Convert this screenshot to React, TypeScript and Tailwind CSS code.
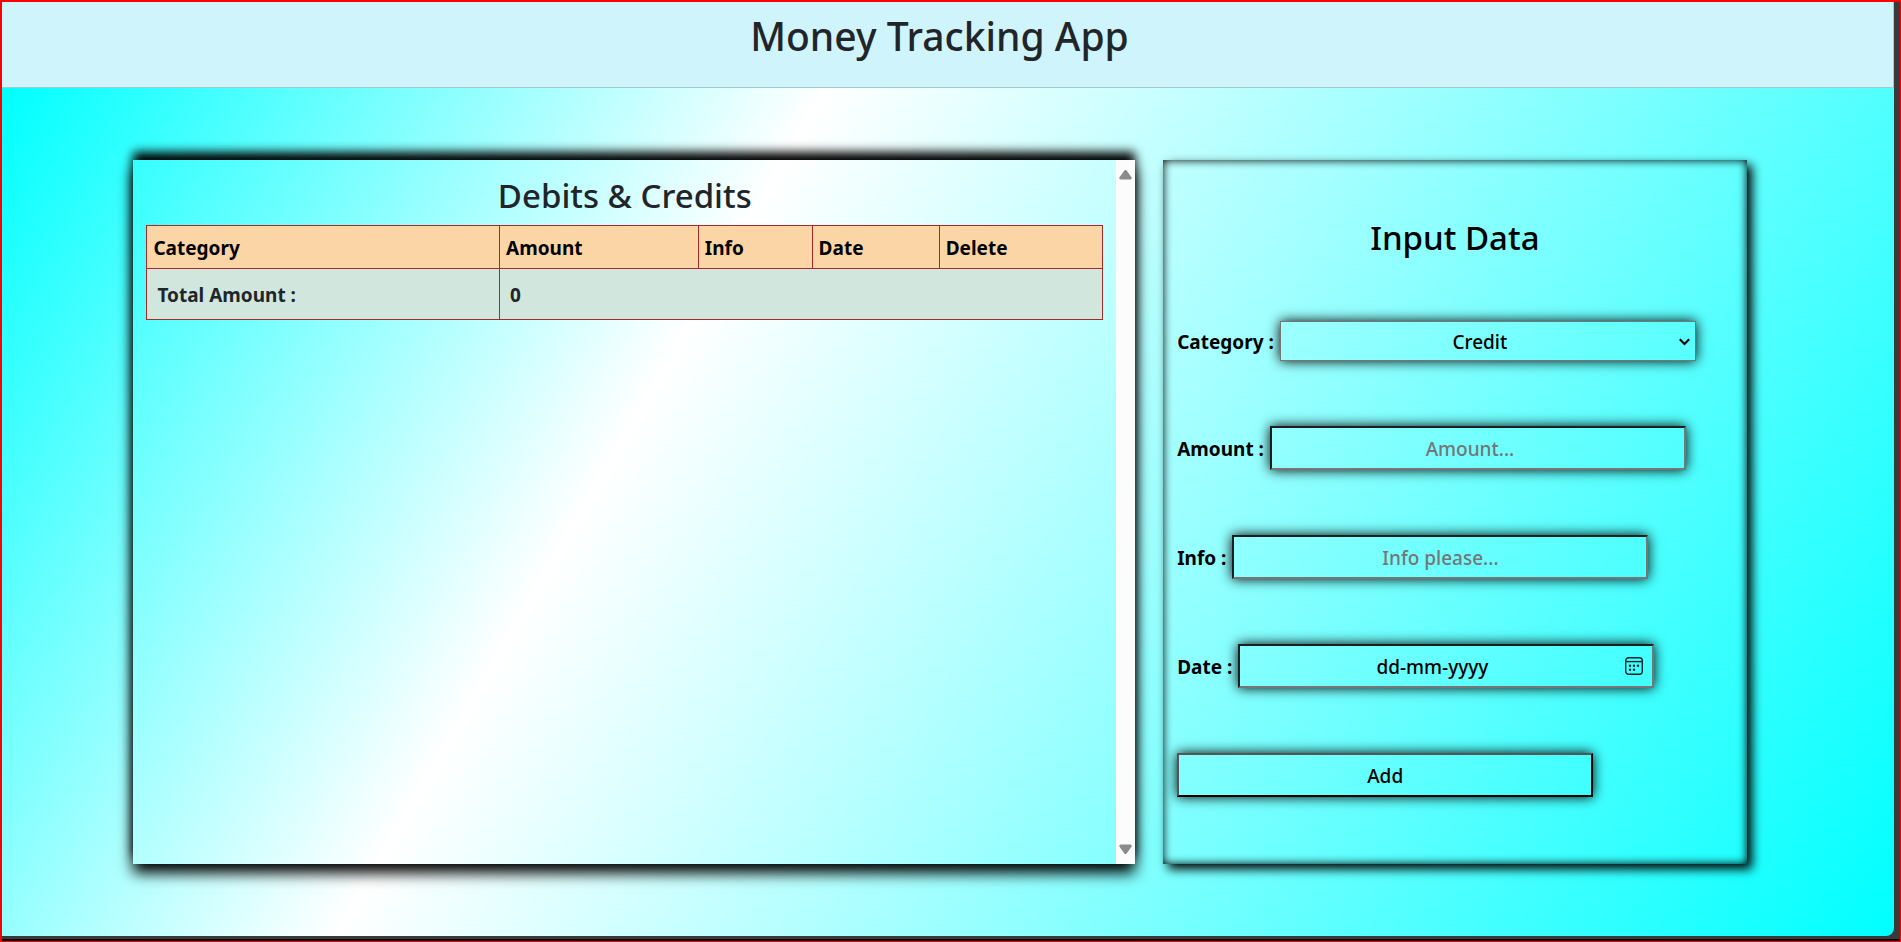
import React from "react";

const glow = "shadow-[0_0_12px_#000]";
const field = `h-11 w-full max-w-[416px] border-2 bg-transparent pt-0.5 text-center text-[19px] leading-7 font-medium text-black ${glow}`;
const inset = "border-t-[#1e1e1e] border-l-[#1e1e1e] border-r-[#767676] border-b-[#767676]";
const label = "shrink-0 pt-0.5 text-[19px] font-bold text-black";
const row = "flex items-center gap-1.5";

function ScrollTrack() {
  return (
    <div aria-hidden="true" className="flex w-[19px] shrink-0 flex-col items-center justify-between bg-[#fcfcfc] py-[9px]">
      <svg width="13" height="11" viewBox="0 0 13 11" fill="#8b8b8b">
        <path d="M5.3 1.6 Q6.5 .4 7.7 1.6 L12.6 8.6 Q13 10.6 11.5 10.6 H1.5 Q0 10.6 .4 8.6 Z" />
      </svg>
      <svg width="13" height="11" viewBox="0 0 13 11" fill="#8b8b8b">
        <path d="M5.3 9.4 Q6.5 10.6 7.7 9.4 L12.6 2.4 Q13 .4 11.5 .4 H1.5 Q0 .4 .4 2.4 Z" />
      </svg>
    </div>
  );
}

function CalendarIcon() {
  return (
    <svg width="18" height="18" viewBox="0 0 18 18" fill="none" stroke="#10282b" strokeWidth="1.4">
      <rect x="0.7" y="0.7" width="16.6" height="16.6" rx="3" />
      <path d="M.7 4.6H17.3" />
      <g fill="#10282b" stroke="none">
        <circle cx="5" cy="8.8" r="1.2" />
        <circle cx="9" cy="8.8" r="1.2" />
        <circle cx="13" cy="8.8" r="1.2" />
        <circle cx="5" cy="12.8" r="1.2" />
        <circle cx="9" cy="12.8" r="1.2" />
      </g>
    </svg>
  );
}

function Entries() {
  const cell = "border border-[#a52a2a] pt-0.5 font-bold";
  return (
    <section className="flex min-h-[700px] w-[53.4%] shadow-[0_-8px_10px_#000,0_9px_14px_#000]">
      <div className="min-w-0 flex-1 px-[13px] pt-4">
        <h2 className="mb-[9px] text-center text-[33px] leading-10 font-medium text-[#212529]">Debits &amp; Credits</h2>
        <table className="w-full table-fixed border-collapse text-left">
          <colgroup>
            <col className="w-[36.9%]" />
            <col className="w-[20.8%]" />
            <col className="w-[11.9%]" />
            <col className="w-[13.3%]" />
            <col className="w-[17.1%]" />
          </colgroup>
          <thead>
            <tr className="h-[43px] bg-[#fbd5a5] text-[19px] text-black">
              {["Category", "Amount", "Info", "Date", "Delete"].map((h) => (
                <th key={h} scope="col" className={`${cell} px-1.5`}>
                  {h}
                </th>
              ))}
            </tr>
          </thead>
          <tbody>
            <tr className="h-[51px] bg-[#d1e7dd] text-[19px] text-[#212529]">
              <th scope="row" className={`${cell} px-2.5`}>
                Total Amount :
              </th>
              <td colSpan={4} className={`${cell} px-2.5`}>
                0
              </td>
            </tr>
          </tbody>
        </table>
      </div>
      <ScrollTrack />
    </section>
  );
}

function EntryForm() {
  return (
    <form
      onSubmit={(e) => e.preventDefault()}
      className="w-[31.1%] px-3.5 pt-[58px] shadow-[5px_5px_10px_#000,inset_0_0_10px_#000]"
    >
      <h2 className="text-center text-[33px] leading-10 font-medium text-black">Input Data</h2>
      <div className="mt-[63px] flex flex-col gap-[65px]">
        <div className={row}>
          <label htmlFor="category" className={label}>Category :</label>
          <div className="relative w-full max-w-[416px]">
            <select
              id="category"
              className={`block h-10 w-full appearance-none border border-[#767676] bg-transparent pt-0.5 pr-4 text-center text-[19px] font-medium text-black ${glow}`}
            >
              <option>Credit</option>
              <option>Debit</option>
            </select>
            <svg className="pointer-events-none absolute top-[17px] right-1.5" width="11" height="8" viewBox="0 0 11 8" fill="none" stroke="#000" strokeWidth="2">
              <path d="M.8 1.2 L5.5 6 L10.2 1.2" />
            </svg>
          </div>
        </div>
        <div className={row}>
          <label htmlFor="amount" className={label}>Amount :</label>
          <input id="amount" inputMode="decimal" placeholder="Amount..." className={`${field} ${inset} pr-4 placeholder:text-[#757575]`} />
        </div>
        <div className={row}>
          <label htmlFor="info" className={label}>Info :</label>
          <input id="info" placeholder="Info please..." className={`${field} ${inset} placeholder:text-[#757575]`} />
        </div>
        <div className={row}>
          <label htmlFor="date" className={label}>Date :</label>
          <div className="relative w-full max-w-[416px]">
            <input id="date" placeholder="dd-mm-yyyy" className={`${field} ${inset} block pr-7 placeholder:text-black`} />
            <button type="button" aria-label="Open calendar" className="absolute top-[13px] right-[11px]">
              <CalendarIcon />
            </button>
          </div>
        </div>
        <button type="submit" className={`${field} border-t-[#555] border-l-[#555] border-r-black border-b-black`}>
          Add
        </button>
      </div>
    </form>
  );
}

export default function App() {
  return (
    <div className="flex min-h-screen border-2 border-r border-b border-[#f00] font-['Noto_Sans','Open_Sans',sans-serif]">
      <div className="flex flex-1 border-b-2 border-black bg-[#3a3a3a]">
        <div className="mr-1.5 mb-[3px] flex flex-1 flex-col">
          <header className="h-[86px] border-r border-b border-[#a6c9c2] bg-[#cff4fc] pt-2.5 pr-4">
            <h1 className="text-center text-[39px] leading-12 font-medium text-[#212529]">Money Tracking App</h1>
          </header>
          <main className="flex flex-1 items-stretch justify-center gap-7 rounded-br-lg bg-[linear-gradient(120deg,#0ff,#fff_34.6%,#0ff)] pt-[72px] pr-4 pb-[72px]">
            <Entries />
            <EntryForm />
          </main>
        </div>
      </div>
    </div>
  );
}
